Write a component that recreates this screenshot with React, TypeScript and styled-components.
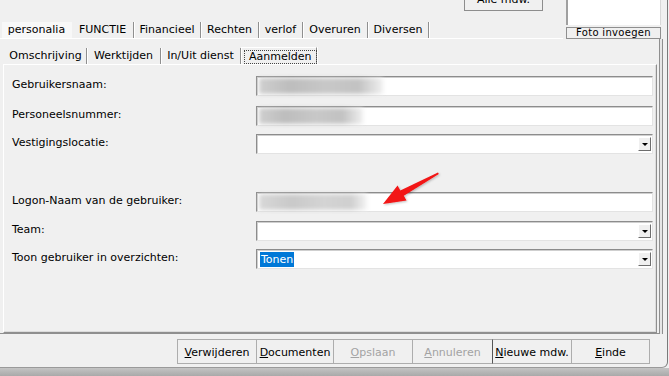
import React from 'react'
import styled, { createGlobalStyle } from 'styled-components'

const GlobalStyle = createGlobalStyle`
  html, body {
    margin: 0;
    padding: 0;
    width: 669px;
    height: 376px;
    overflow: hidden;
    background: #f0f0f0;
    font-family: "DejaVu Sans", Tahoma, sans-serif;
    font-size: 11px;
    color: #000;
  }
  * { box-sizing: border-box; }
`

const mainTabs = [
  { label: 'personalia', width: 70, hover: true },
  { label: 'FUNCTIE', width: 62, active: true },
  { label: 'Financieel', width: 67 },
  { label: 'Rechten', width: 58 },
  { label: 'verlof', width: 44 },
  { label: 'Overuren', width: 65 },
  { label: 'Diversen', width: 61 }
]

const subTabs = [
  { label: 'Omschrijving', width: 82 },
  { label: 'Werktijden', width: 74 },
  { label: 'In/Uit dienst', width: 80 },
  { label: 'Aanmelden', width: 76, active: true }
]

const App = () => {
  return (
    <>
      <GlobalStyle />
      <Window>
        <Header>
          <HeaderLeft>
            <TopRow>
              <AlleButton>Alle mdw.</AlleButton>
            </TopRow>
            <TabStrip>
              {mainTabs.map(t => (
                <MainTab key={t.label} $width={t.width} $hover={t.hover} $active={t.active}>
                  {t.label}
                </MainTab>
              ))}
            </TabStrip>
          </HeaderLeft>
          <PhotoColumn>
            <PhotoBox />
            <PhotoButton>Foto invoegen</PhotoButton>
          </PhotoColumn>
        </Header>

        <OuterPage>
          <SubTabStrip>
            {subTabs.map(t => (
              <SubTab key={t.label} $width={t.width} $active={t.active}>
                {t.active ? <Focus>{t.label}</Focus> : t.label}
              </SubTab>
            ))}
          </SubTabStrip>
          <InnerPanel>
            <FormRow $top={11}>
              <Label>Gebruikersnaam:</Label>
              <Field><Blur $width={124} /></Field>
            </FormRow>
            <FormRow $top={10}>
              <Label>Personeelsnummer:</Label>
              <Field><Blur $width={104} /></Field>
            </FormRow>
            <FormRow $top={8}>
              <Label>Vestigingslocatie:</Label>
              <Field><Grow /><DropButton><Caret /></DropButton></Field>
            </FormRow>
            <FormRow $top={38}>
              <Label>Logon-Naam van de gebruiker:</Label>
              <Field><Blur $width={108} $light /></Field>
            </FormRow>
            <FormRow $top={9}>
              <Label>Team:</Label>
              <Field><Grow /><DropButton><Caret /></DropButton></Field>
            </FormRow>
            <FormRow $top={8}>
              <Label>Toon gebruiker in overzichten:</Label>
              <Field>
                <Grow><Selected>Tonen</Selected></Grow>
                <DropButton><Caret /></DropButton>
              </Field>
            </FormRow>
          </InnerPanel>
        </OuterPage>

        <ButtonBar>
          <ActionButton $width={80}><u>V</u>erwijderen</ActionButton>
          <ActionButton $width={78}><u>D</u>ocumenten</ActionButton>
          <ActionButton $width={80} disabled><u>O</u>pslaan</ActionButton>
          <ActionButton $width={81} disabled><u>A</u>nnuleren</ActionButton>
          <ActionButton $width={80} $focus><u>N</u>ieuwe mdw.</ActionButton>
          <ActionButton $width={79}><u>E</u>inde</ActionButton>
        </ButtonBar>

        <Arrow width="669" height="376" viewBox="0 0 669 376">
          <defs>
            <filter id="sh" x="-20%" y="-20%" width="140%" height="140%">
              <feDropShadow dx="1" dy="1" stdDeviation="1" floodColor="#000" floodOpacity="0.25" />
            </filter>
          </defs>
          <polygon
            points="438,172.4 438.8,174 403.8,195.8 406.5,200.5 383,204 397.6,185.6 400.3,190.6"
            fill="#f21414"
            filter="url(#sh)"
          />
        </Arrow>
      </Window>
      <Shadow />
    </>
  )
}

export default App

const Window = styled.div`
  position: relative;
  width: 668px;
  height: 368px;
  border-right: 1px solid #7a7a7a;
  border-bottom: 1px solid #9a9a9a;
  border-bottom-right-radius: 6px;
  background: #f0f0f0;
  overflow: hidden;
`

const Shadow = styled.div`
  height: 8px;
  background: linear-gradient(#c4c4c4, #a9a9a9);
`

const Header = styled.div`
  display: flex;
  height: 39px;
`

const HeaderLeft = styled.div`
  width: 563px;
  display: flex;
  flex-direction: column;
`

const TopRow = styled.div`
  height: 22px;
  display: flex;
  justify-content: flex-end;
  padding-right: 20px;
`

const AlleButton = styled.div`
  width: 79px;
  height: 24px;
  margin-top: -13px;
  border: 1px solid #8d8d8d;
  background: #f0f0f0;
  display: flex;
  align-items: center;
  justify-content: center;
  padding-top: 1px;
`

const TabStrip = styled.div`
  display: flex;
  height: 17px;
  padding-left: 2px;
  border-bottom: 1px solid #fff;
`

const MainTab = styled.div<{ $width: number; $hover?: boolean; $active?: boolean }>`
  width: ${p => p.$width}px;
  height: 16px;
  line-height: 16px;
  text-align: center;
  background: ${p => (p.$hover ? '#f8f8f8' : 'transparent')};
  border-right: ${p => (p.$hover ? '1px solid transparent' : '1px solid #8f8f8f')};
  box-shadow: ${p => (p.$hover ? 'none' : '1px 0 0 #fff')};
  white-space: nowrap;
`

const PhotoColumn = styled.div`
  margin-left: 3px;
  width: 95px;
  display: flex;
  flex-direction: column;
`

const PhotoBox = styled.div`
  height: 26px;
  background: #fff;
  border-left: 2px solid #a0a0a0;
  border-right: 1px solid #d8d8d8;
`

const PhotoButton = styled.div`
  margin-top: 2px;
  height: 12px;
  border: 1px solid #8f8f8f;
  font-size: 10px;
  line-height: 10px;
  text-align: center;
  letter-spacing: 0.3px;
`

const OuterPage = styled.div`
  width: 660px;
  height: 295px;
  border-right: 1px solid #8f8f8f;
  border-bottom: 1px solid #8f8f8f;
  box-shadow: 2px 0 0 #e6e6e6, 3px 0 0 #8f8f8f;
  padding-top: 9px;
  display: flex;
  flex-direction: column;
`

const SubTabStrip = styled.div`
  display: flex;
  height: 16px;
  padding-left: 5px;
`

const SubTab = styled.div<{ $width: number; $active?: boolean }>`
  width: ${p => p.$width}px;
  height: ${p => (p.$active ? 17 : 16)}px;
  line-height: 16px;
  text-align: center;
  white-space: nowrap;
  border-right: 1px solid #8f8f8f;
  box-shadow: 1px 0 0 #fff;
  ${p => p.$active && `
    background: #f0f0f0;
    border-top: 1px solid #fff;
    border-left: 1px solid #fff;
    margin-top: -1px;
    padding: 1px 2px 0;
    position: relative;
    z-index: 1;
  `}
`

const Focus = styled.span`
  display: inline-block;
  height: 14px;
  line-height: 13px;
  padding: 0 5px;
  outline: 1px dotted #444;
  outline-offset: -1px;
`

const InnerPanel = styled.div`
  margin: 0 2px 0 3px;
  height: 269px;
  border-top: 1px solid #fff;
  border-left: 1px solid #fff;
  border-right: 1px solid #8f8f8f;
  border-bottom: 1px solid #8f8f8f;
  box-shadow: inset -1px -1px 0 #dcdcdc;
  padding-left: 8px;
`

const FormRow = styled.div<{ $top: number }>`
  display: flex;
  align-items: center;
  height: 20px;
  margin-top: ${p => p.$top}px;
`

const Label = styled.div`
  width: 244px;
  padding-bottom: 3px;
  white-space: nowrap;
`

const Field = styled.div`
  width: 397px;
  height: 20px;
  display: flex;
  align-items: stretch;
  background: #fff;
  border: 1px solid;
  border-color: #8c8c8c #e3e3e3 #e3e3e3 #8c8c8c;
  box-shadow: inset 1px 1px 0 #cfcfcf;
  padding: 1px 1px 1px 2px;
`

const Blur = styled.div<{ $width: number; $light?: boolean }>`
  width: ${p => p.$width}px;
  background: ${p => (p.$light
    ? 'linear-gradient(90deg, #d8d8d8, #c9c9c9 30%, #d4d4d4 60%, #cfcfcf 85%, #f4f4f4)'
    : 'linear-gradient(90deg, #cfcfcf, #bdbdbd 25%, #c8c8c8 55%, #c2c2c2 80%, #f0f0f0)')};
  filter: blur(2px);
`

const Grow = styled.div`
  flex: 1;
  display: flex;
  align-items: center;
  padding-left: 1px;
`

const Selected = styled.span`
  background: #0078d7;
  color: #fff;
  height: 15px;
  line-height: 15px;
  padding: 0 1px;
`

const DropButton = styled.div`
  width: 13px;
  margin: 1px 0;
  background: #f0f0f0;
  border: 1px solid;
  border-color: #fff #6d6d6d #6d6d6d #fff;
  display: flex;
  align-items: center;
  justify-content: center;
`

const Caret = styled.div`
  width: 0;
  height: 0;
  border-left: 3px solid transparent;
  border-right: 3px solid transparent;
  border-top: 3px solid #000;
  margin-top: 1px;
`

const ButtonBar = styled.div`
  display: flex;
  justify-content: flex-end;
  padding-right: 17px;
  margin-top: 5px;
`

const ActionButton = styled.button<{ $width: number; $focus?: boolean }>`
  width: ${p => p.$width}px;
  height: 25px;
  margin-left: -1px;
  background: #f0f0f0;
  border: 1px solid #adadad;
  border-left-color: ${p => (p.$focus ? '#555' : '#adadad')};
  font-family: inherit;
  font-size: 11px;
  color: #000;
  padding: 2px 0 0;
  &:disabled {
    color: #a3a3a3;
  }
`

const Arrow = styled.svg`
  position: absolute;
  left: 0;
  top: 0;
  pointer-events: none;
`
